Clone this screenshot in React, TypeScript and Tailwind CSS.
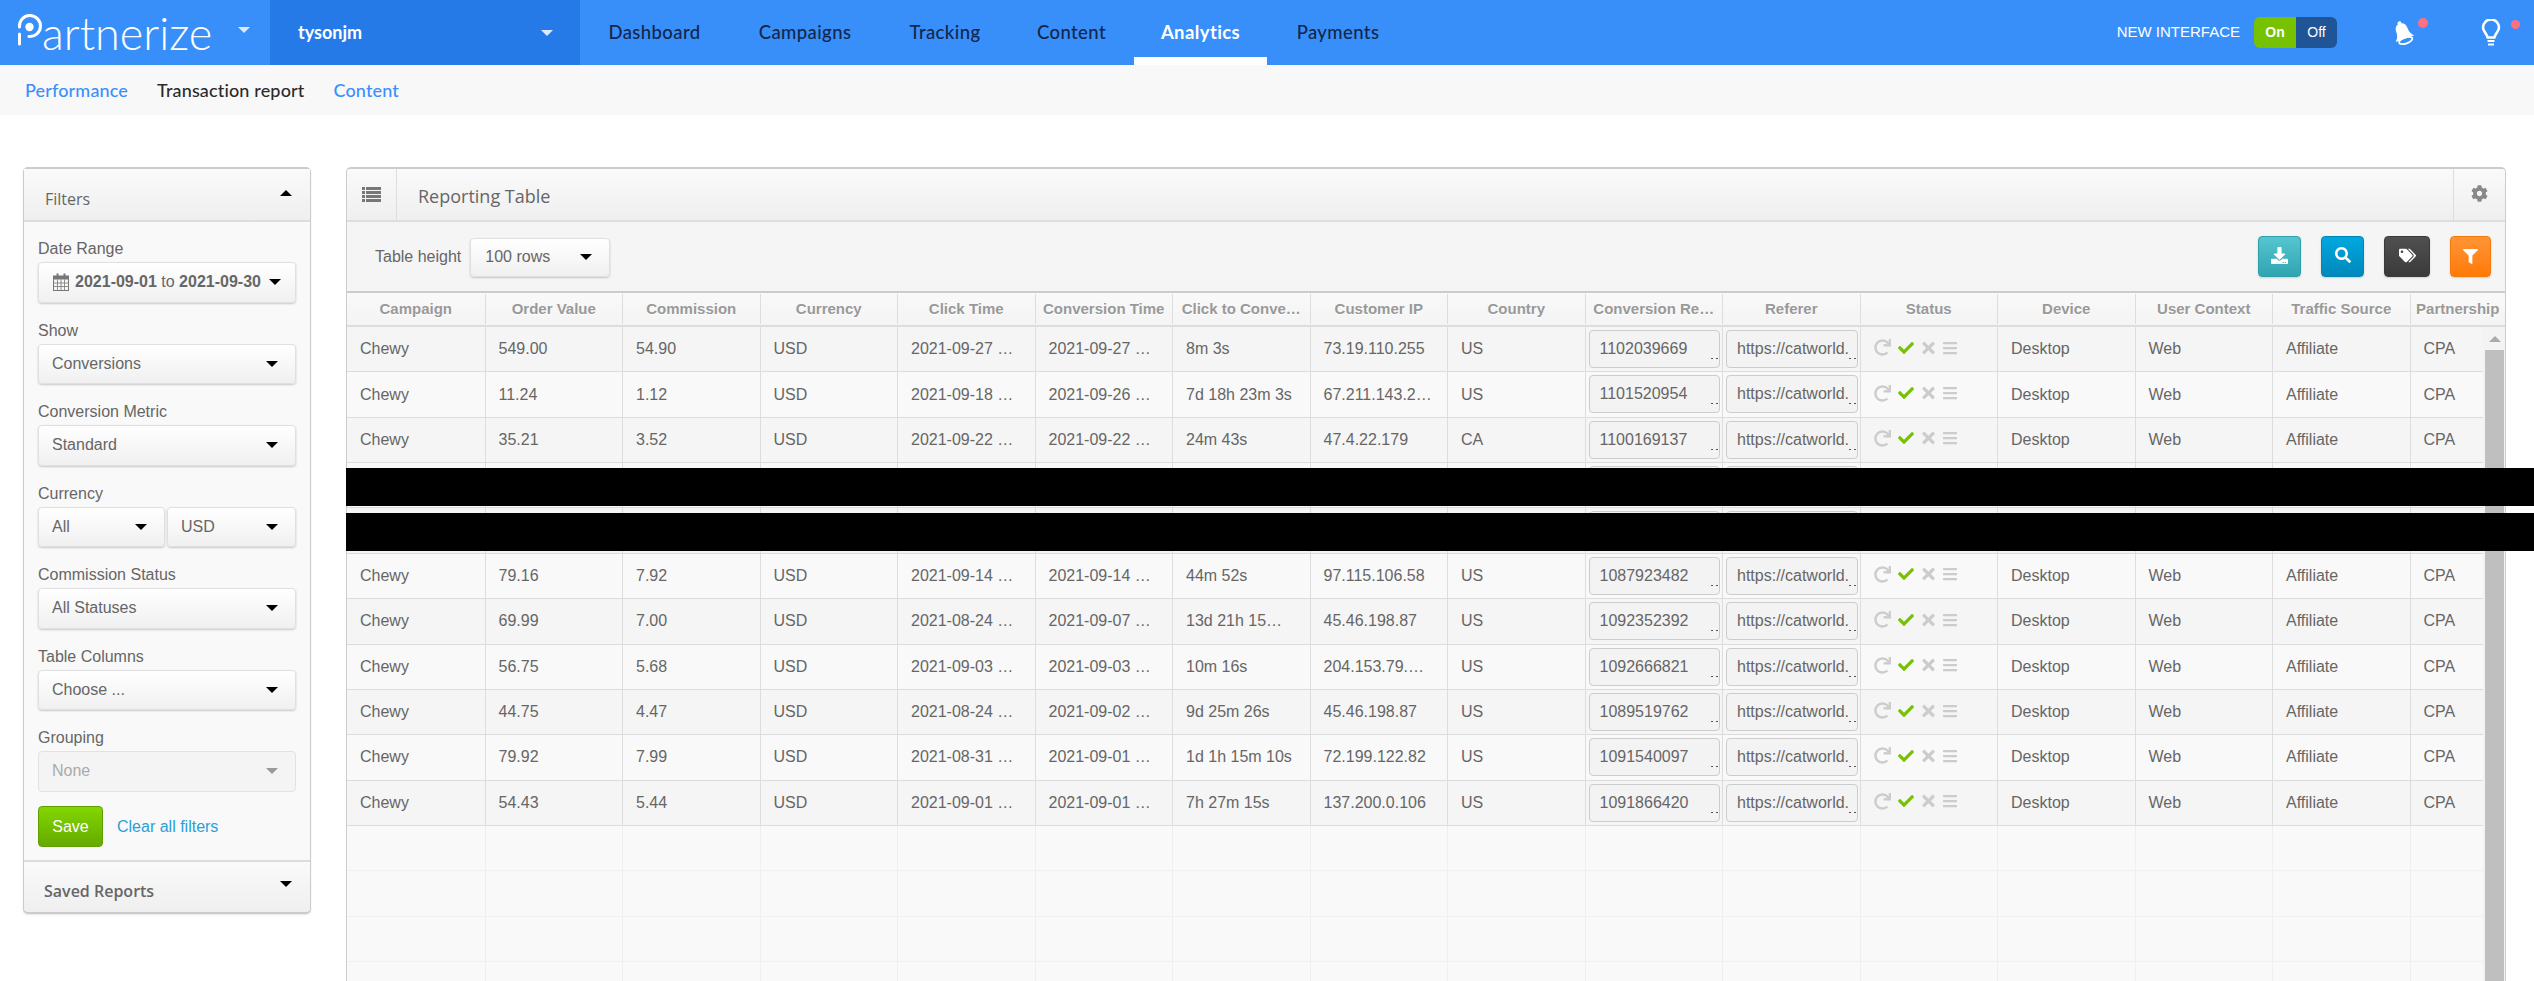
import { FaBars, FaCheck, FaCog, FaDownload, FaFilter, FaRedo, FaSearch, FaTags, FaTimes } from "react-icons/fa";

const COLUMNS = [
  "Campaign",
  "Order Value",
  "Commission",
  "Currency",
  "Click Time",
  "Conversion Time",
  "Click to Conve…",
  "Customer IP",
  "Country",
  "Conversion Re…",
  "Referer",
  "Status",
  "Device",
  "User Context",
  "Traffic Source",
  "Partnership",
];

const ROWS: (string[] | null)[] = [
  ["549.00", "54.90", "2021-09-27 …", "2021-09-27 …", "8m 3s", "73.19.110.255", "US", "1102039669"],
  ["11.24", "1.12", "2021-09-18 …", "2021-09-26 …", "7d 18h 23m 3s", "67.211.143.2…", "US", "1101520954"],
  ["35.21", "3.52", "2021-09-22 …", "2021-09-22 …", "24m 43s", "47.4.22.179", "CA", "1100169137"],
  null,
  null,
  ["79.16", "7.92", "2021-09-14 …", "2021-09-14 …", "44m 52s", "97.115.106.58", "US", "1087923482"],
  ["69.99", "7.00", "2021-08-24 …", "2021-09-07 …", "13d 21h 15…", "45.46.198.87", "US", "1092352392"],
  ["56.75", "5.68", "2021-09-03 …", "2021-09-03 …", "10m 16s", "204.153.79.…", "US", "1092666821"],
  ["44.75", "4.47", "2021-08-24 …", "2021-09-02 …", "9d 25m 26s", "45.46.198.87", "US", "1089519762"],
  ["79.92", "7.99", "2021-08-31 …", "2021-09-01 …", "1d 1h 15m 10s", "72.199.122.82", "US", "1091540097"],
  ["54.43", "5.44", "2021-09-01 …", "2021-09-01 …", "7h 27m 15s", "137.200.0.106", "US", "1091866420"],
];

function Caret({ up, className = "border-t-black" }: { up?: boolean; className?: string }) {
  return (
    <span
      className={
        up
          ? "inline-block border-x-[6px] border-b-[6px] border-x-transparent border-b-black"
          : `inline-block border-x-[6px] border-t-[6px] border-x-transparent ${className}`
      }
    />
  );
}

function Logo() {
  return (
    <div className="flex w-[270px] items-center pl-[17px]">
      <svg viewBox="0 0 25 34" className="mt-[13px] h-[34px] w-[25px] shrink-0 self-start overflow-visible">
        <path d="M2.5 14A10.5 10.5 0 1 1 12 23.5" fill="none" stroke="#fff" strokeWidth="3" strokeLinecap="round" />
        <path d="M2.5 21V31" fill="none" stroke="#fff" strokeWidth="3" strokeLinecap="round" />
        <circle cx="12.5" cy="14" r="4.2" fill="#fff" />
      </svg>
      <span className="mt-[1px] font-['Lato',sans-serif] text-[45px] font-light leading-none text-white">artnerize</span>
      <span className="ml-[26px] mt-[-5px] flex">
        <Caret className="border-t-[#dbe9fd]" />
      </span>
    </div>
  );
}

function TopNav() {
  const items = [
    { label: "Dashboard", w: "w-[149px]" },
    { label: "Campaigns", w: "w-[152px]" },
    { label: "Tracking", w: "w-[128px]" },
    { label: "Content", w: "w-[125px]" },
    { label: "Analytics", w: "w-[133px]", active: true },
    { label: "Payments", w: "w-[142px]" },
  ];
  return (
    <div className="flex h-[65px] bg-[#388ffa]">
      <Logo />
      <div className="flex w-[310px] items-center justify-between bg-[#267ae8] pl-[28px] pr-[27px]">
        <span className="font-['Lato',sans-serif] text-[18px] font-bold text-white">tysonjm</span>
        <Caret className="border-t-[#dbe9fd]" />
      </div>
      <nav className="flex">
        {items.map((item) => (
          <a
            key={item.label}
            className={`${item.w} flex items-center justify-center border-b-[8px] pt-[8px] font-['Lato',sans-serif] text-[18.5px] tracking-[0.4px] ${
              item.active ? "border-white font-bold text-white" : "border-transparent font-medium text-[#14264a]"
            }`}
          >
            {item.label}
          </a>
        ))}
      </nav>
      <div className="ml-auto flex items-center pr-[33px] font-['Liberation_Sans',sans-serif]">
        <span className="text-[15px] text-white">NEW INTERFACE</span>
        <div className="ml-[14px] flex h-[31px] w-[83px] overflow-hidden rounded-[6px] text-[14px] text-white">
          <span className="flex w-[42px] items-center justify-center bg-[#76c100] font-bold">On</span>
          <span className="flex flex-1 items-center justify-center bg-[#1f5496]">Off</span>
        </div>
        <div className="relative ml-[54px]">
          <svg viewBox="0 0 24 26" className="h-[26px] w-[24px] overflow-visible">
            <g transform="rotate(-20 12 13)">
              <circle cx="12" cy="2.8" r="2" fill="#fff" />
              <path d="M12 3c4 0 6 3 6 7 0 5 2 7 4 9H2c2-2 4-4 4-9 0-4 2-7 6-7z" fill="#fff" />
              <ellipse cx="12" cy="21" rx="7" ry="3" fill="none" stroke="#fff" strokeWidth="1.8" />
            </g>
          </svg>
          <span className="absolute left-[27px] top-[-2px] h-[10px] w-[10px] rounded-full bg-[#ff6f80]" />
        </div>
        <div className="relative ml-[66px]">
          <svg viewBox="0 0 20 27" className="h-[27px] w-[20px]">
            <path
              d="M6.5 18.5C6 14.5 2 12.5 2 8.5a8 8 0 0 1 16 0c0 4-4 6-4.5 10z"
              fill="none"
              stroke="#fff"
              strokeWidth="2.6"
              strokeLinejoin="round"
            />
            <path d="M6.5 22h7M7 25.5h6" stroke="#fff" strokeWidth="2" />
          </svg>
          <span className="absolute left-[30px] top-[1px] h-[9px] w-[9px] rounded-full bg-[#ff6f80]" />
        </div>
      </div>
    </div>
  );
}

function SubNav() {
  return (
    <div className="flex h-[50px] items-center gap-[29px] bg-[#f8f8f8] pl-[25px] font-['Lato',sans-serif] text-[18px] font-medium tracking-[0.15px]">
      <a className="text-[#3a8ffb]">Performance</a>
      <a className="text-[#2b2b2b]">Transaction report</a>
      <a className="text-[#3a8ffb]">Content</a>
    </div>
  );
}

function SelectBox({ value, className = "w-full", disabled }: { value: string; className?: string; disabled?: boolean }) {
  return (
    <div
      className={`${className} flex h-[40.5px] items-center justify-between rounded-[4px] border pl-[13px] pr-[17px] text-[16px] ${
        disabled
          ? "border-[#e2e2e2] bg-[#f4f4f4] text-[#aaa]"
          : "border-[#e0e0e0] bg-gradient-to-b from-white to-[#f0f0f0] text-[#666] shadow-[0_1px_2px_rgba(0,0,0,0.2)]"
      }`}
    >
      <span>{value}</span>
      <Caret className={disabled ? "border-t-[#999]" : "border-t-black"} />
    </div>
  );
}

function Field({ label, children }: { label: string; children: React.ReactNode }) {
  return (
    <div>
      <div className="mb-[4px] h-[20px] text-[16px] leading-[21px] text-[#666]">{label}</div>
      {children}
    </div>
  );
}

function CalendarIcon() {
  return (
    <svg viewBox="0 0 16 18" className="h-[18px] w-[16px] shrink-0">
      <rect x="0.5" y="3" width="15" height="14.5" fill="none" stroke="#777" />
      <rect x="0.5" y="3" width="15" height="3.5" fill="#777" />
      <path d="M0.5 10h15M0.5 13.5h15M4.5 6.5v11M8 6.5v11M11.5 6.5v11" stroke="#777" strokeWidth="0.8" />
      <rect x="3.5" y="0.5" width="2" height="4" fill="#777" />
      <rect x="10.5" y="0.5" width="2" height="4" fill="#777" />
    </svg>
  );
}

function ListIcon() {
  return (
    <svg viewBox="0 0 19 15" className="h-[15px] w-[19px]" fill="#777">
      <path d="M0 0h3v3H0zM4 0h15v3H4zM0 4h3v3H0zM4 4h15v3H4zM0 8h3v3H0zM4 8h15v3H4zM0 12h3v3H0zM4 12h15v3H4z" />
    </svg>
  );
}

function Sidebar() {
  return (
    <aside className="h-[747px] w-[288px] shrink-0 rounded-[5px] border border-b-[3px] border-t-2 border-[#ccc] bg-[#f9f9f9] shadow-[0_1px_2px_rgba(0,0,0,0.1)]">
      <div className="flex h-[53px] items-center justify-between border-b-2 border-[#ddd] bg-gradient-to-b from-[#fafafa] to-[#efefef] pl-[21px] pr-[18px]">
        <span className="mt-[8px] font-['Open_Sans',sans-serif] text-[16px] font-medium text-[#666]">Filters</span>
        <span className="mt-[-4px] flex">
          <Caret up />
        </span>
      </div>
      <div className="px-[14px] pt-[16px]">
        <div className="flex flex-col gap-[17px]">
          <Field label="Date Range">
            <div className="flex h-[40.5px] items-center justify-between rounded-[4px] border border-[#e0e0e0] bg-gradient-to-b from-white to-[#f0f0f0] pl-[14px] pr-[14px] text-[16px] text-[#666] shadow-[0_1px_2px_rgba(0,0,0,0.2)]">
              <CalendarIcon />
              <span className="ml-[2px] whitespace-nowrap">
                <b>2021-09-01</b> to <b>2021-09-30</b>
              </span>
              <span className="ml-[4px] flex">
                <Caret />
              </span>
            </div>
          </Field>
          <Field label="Show">
            <SelectBox value="Conversions" />
          </Field>
          <Field label="Conversion Metric">
            <SelectBox value="Standard" />
          </Field>
          <Field label="Currency">
            <div className="flex gap-[2px]">
              <SelectBox value="All" className="w-[127px]" />
              <SelectBox value="USD" className="flex-1" />
            </div>
          </Field>
          <Field label="Commission Status">
            <SelectBox value="All Statuses" />
          </Field>
          <Field label="Table Columns">
            <SelectBox value="Choose ..." />
          </Field>
          <Field label="Grouping">
            <SelectBox value="None" disabled />
          </Field>
        </div>
        <div className="mt-[14.5px] flex h-[41px] items-center">
          <button className="h-[41px] w-[65px] rounded-[4px] border border-[#5f9f00] bg-gradient-to-b from-[#84d600] to-[#64aa00] text-[16px] text-white">
            Save
          </button>
          <a className="ml-[14px] text-[16px] text-[#2a9fd8]">Clear all filters</a>
        </div>
      </div>
      <div className="mt-[13px] flex h-[52px] items-center justify-between rounded-b-[4px] border-t-2 border-[#ddd] bg-gradient-to-b from-[#fafafa] to-[#efefef] pl-[20px] pr-[18px]">
        <span className="mt-[8px] font-['Open_Sans',sans-serif] text-[16px] font-semibold text-[#666]">Saved Reports</span>
        <span className="mt-[-6px] flex">
          <Caret />
        </span>
      </div>
    </aside>
  );
}

function Toolbar() {
  return (
    <div className="flex h-[69px] items-center justify-between bg-[#f5f5f5] pl-[28px] pr-[14px] text-[16px] text-[#666]">
      <div className="mt-[1px] flex items-center">
        <span>Table height</span>
        <div className="ml-[9px] flex h-[39px] w-[140px] items-center justify-between rounded-[4px] border border-[#e0e0e0] bg-gradient-to-b from-white to-[#f0f0f0] pl-[14px] pr-[17px] shadow-[0_1px_2px_rgba(0,0,0,0.2)]">
          <span>100 rows</span>
          <Caret />
        </div>
      </div>
      <div className="flex items-center gap-[20px]">
        <button className="flex h-[41px] w-[43px] items-center justify-center rounded-[4px] border border-[#2f9fab] bg-gradient-to-b from-[#55c5cf] to-[#30a5b0] text-[17px] text-white shadow-[0_1px_2px_rgba(0,0,0,0.15)]">
          <FaDownload className="mt-[-3px]" />
        </button>
        <button className="flex h-[41px] w-[43px] items-center justify-center rounded-[4px] border border-[#0085b5] bg-gradient-to-b from-[#00a8e0] to-[#0088bb] text-[16px] text-white shadow-[0_1px_2px_rgba(0,0,0,0.15)]">
          <FaSearch className="mt-[-3px]" />
        </button>
        <button className="flex h-[41px] w-[46px] items-center justify-center rounded-[4px] border border-[#3a3a3a] bg-gradient-to-b from-[#505050] to-[#3a3a3a] text-[17px] text-white shadow-[0_1px_2px_rgba(0,0,0,0.15)]">
          <FaTags className="mt-[-3px]" />
        </button>
        <button className="flex h-[41px] w-[41px] items-center justify-center rounded-[4px] border border-[#ee7a10] bg-gradient-to-b from-[#ff9432] to-[#ff7a00] text-[15px] text-white shadow-[0_1px_2px_rgba(0,0,0,0.15)]">
          <FaFilter />
        </button>
      </div>
    </div>
  );
}

function Cell({ children }: { children?: React.ReactNode }) {
  return (
    <div className="flex min-w-0 items-center overflow-hidden whitespace-nowrap border-r border-[#ddd] pl-[13px] last:border-r-0">
      {children}
    </div>
  );
}

function NoteBox({ text, clip }: { text?: string; clip?: boolean }) {
  return (
    <div className="relative flex h-[38px] w-full items-center overflow-hidden rounded-[4px] border border-[#ccc] bg-[#f3f3f3] pl-[10px]">
      <span className={clip ? "w-[111px] overflow-hidden whitespace-nowrap" : "whitespace-nowrap"}>{text}</span>
      <span className="absolute bottom-[8px] right-[6px] h-px w-[2px] bg-[#555]" />
      <span className="absolute bottom-[8px] right-px h-px w-[2px] bg-[#555]" />
    </div>
  );
}

function BoxCell({ text, clip }: { text?: string; clip?: boolean }) {
  return (
    <div className="flex min-w-0 items-start border-r border-[#ddd] pl-[3px] pr-[2px] pt-[3px]">
      <NoteBox text={text} clip={clip} />
    </div>
  );
}

function StatusIcons() {
  return (
    <div className="mt-[-3px] flex items-center gap-[7px] text-[#ccc]">
      <FaRedo className="text-[17px]" />
      <FaCheck className="text-[16px] text-[#76c100]" />
      <FaTimes className="ml-[1px] w-[13px] text-[18px]" />
      <FaBars className="text-[16px]" />
    </div>
  );
}

function DataRow({ row, index }: { row: string[] | null; index: number }) {
  const stripe = index % 2 === 0 ? "bg-[#f5f5f5]" : "bg-[#f9f9f9]";
  return (
    <div
      className={`grid h-[45.36px] grid-cols-[138.5px_repeat(14,137.5px)_72.5px] border-b border-[#dcdcdc] ${stripe}`}
    >
      <Cell>{row && "Chewy"}</Cell>
      <Cell>{row?.[0]}</Cell>
      <Cell>{row?.[1]}</Cell>
      <Cell>{row && "USD"}</Cell>
      <Cell>{row?.[2]}</Cell>
      <Cell>{row?.[3]}</Cell>
      <Cell>{row?.[4]}</Cell>
      <Cell>{row?.[5]}</Cell>
      <Cell>{row?.[6]}</Cell>
      <BoxCell text={row?.[7]} />
      <BoxCell text={row ? "https://catworld." : undefined} clip />
      <Cell>{row && <StatusIcons />}</Cell>
      <Cell>{row && "Desktop"}</Cell>
      <Cell>{row && "Web"}</Cell>
      <Cell>{row && "Affiliate"}</Cell>
      <Cell>{row && "CPA"}</Cell>
    </div>
  );
}

function EmptyRow() {
  return (
    <div className="grid h-[45.36px] grid-cols-[138.5px_repeat(14,137.5px)_72.5px] border-b border-[#f0f0f0] bg-[#f9f9f9]">
      {COLUMNS.map((c) => (
        <div key={c} className="border-r border-[#efefef] last:border-r-0" />
      ))}
    </div>
  );
}

function ReportingTable() {
  return (
    <section className="flex min-w-0 flex-1 flex-col overflow-hidden rounded-t-[5px] border-x border-t-2 border-[#ccc]">
      <div className="flex h-[53px] shrink-0 border-b-2 border-[#ddd] bg-gradient-to-b from-[#fafafa] to-[#efefef]">
        <div className="flex w-[50px] items-center justify-center border-r border-[#ddd]">
          <ListIcon />
        </div>
        <span className="ml-[21px] mt-[3px] flex-1 self-center font-['Open_Sans',sans-serif] text-[18px] text-[#666]">
          Reporting Table
        </span>
        <div className="flex w-[52px] items-center justify-center border-l border-[#ddd] text-[17px] text-[#888]">
          <FaCog className="mt-[-3px]" />
        </div>
      </div>
      <Toolbar />
      <div className="grid h-[36px] shrink-0 grid-cols-[138.5px_repeat(14,137.5px)_1fr] border-y-2 border-b-[#ddd] border-t-[#ccc] bg-gradient-to-b from-[#f9f9f9] to-[#f4f4f4] pt-[1px] text-[15px] font-bold text-[#999]">
        {COLUMNS.map((c) => (
          <div
            key={c}
            className="mb-[1px] flex items-center justify-center overflow-hidden whitespace-nowrap border-r border-[#ddd] [text-shadow:0_1px_0_#fff] last:border-r-0"
          >
            {c}
          </div>
        ))}
      </div>
      <div className="flex min-h-0 flex-1 overflow-hidden text-[16px] text-[#666]">
        <div className="w-[2136px] shrink-0">
          {ROWS.map((row, i) => (
            <DataRow key={i} row={row} index={i} />
          ))}
          {[0, 1, 2, 3].map((i) => (
            <EmptyRow key={i} />
          ))}
        </div>
        <div className="flex flex-1 flex-col bg-[#f3f3f3] pl-[2px] pr-px">
          <div className="flex h-[23px] shrink-0 items-center justify-center">
            <span className="border-x-[6px] border-b-[6px] border-x-transparent border-b-[#aaa]" />
          </div>
          <div className="flex-1 bg-[#bfbfbf]" />
        </div>
      </div>
    </section>
  );
}

export default function App() {
  return (
    <div className="relative flex h-screen flex-col overflow-hidden bg-white font-['Liberation_Sans',Arial,sans-serif]">
      <TopNav />
      <SubNav />
      <main className="flex min-h-0 flex-1 items-start gap-[35px] pl-[23px] pr-[28px] pt-[52px]">
        <Sidebar />
        <div className="flex h-full min-w-0 flex-1">
          <ReportingTable />
        </div>
      </main>
      <div className="absolute left-[346px] right-0 top-[468px] h-[38px] bg-black" />
      <div className="absolute left-[346px] right-0 top-[513px] h-[38px] bg-black" />
    </div>
  );
}
